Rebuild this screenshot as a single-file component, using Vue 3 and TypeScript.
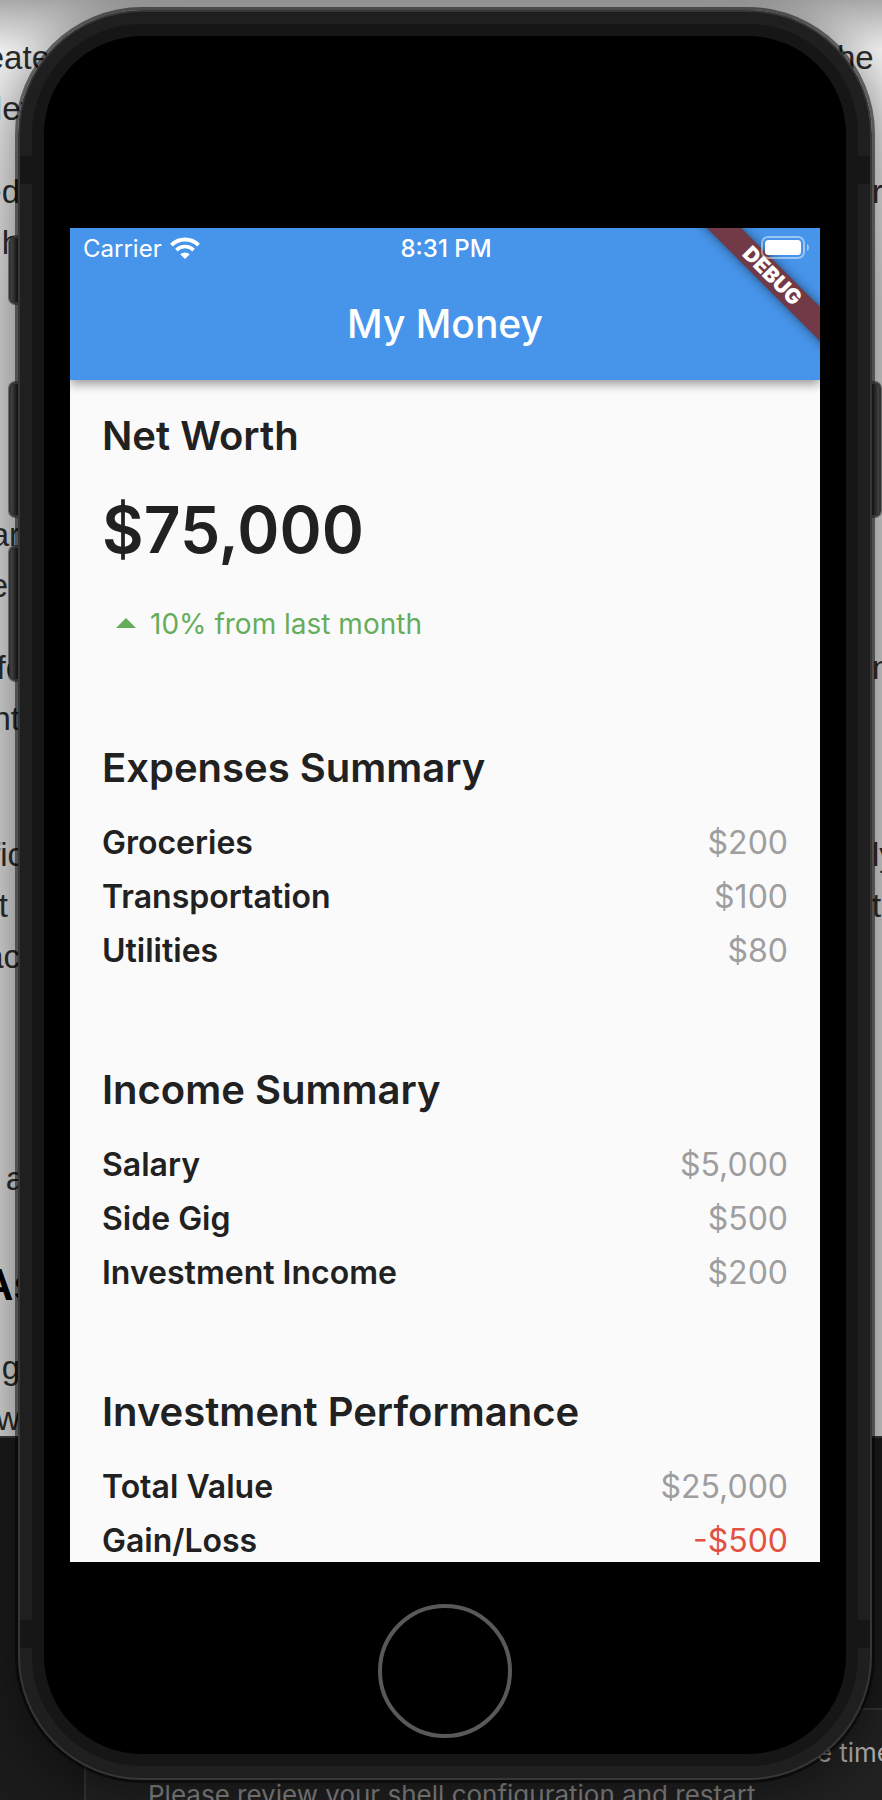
<script setup lang="ts">
interface Entry {
  label: string
  value: string
  negative?: boolean
}
interface Summary {
  title: string
  entries: Entry[]
}
interface Scrap {
  text: string
  top: number
  kind?: string
}

const summaries: Summary[] = [
  {
    title: 'Expenses Summary',
    entries: [
      { label: 'Groceries', value: '$200' },
      { label: 'Transportation', value: '$100' },
      { label: 'Utilities', value: '$80' },
    ],
  },
  {
    title: 'Income Summary',
    entries: [
      { label: 'Salary', value: '$5,000' },
      { label: 'Side Gig', value: '$500' },
      { label: 'Investment Income', value: '$200' },
    ],
  },
  {
    title: 'Investment Performance',
    entries: [
      { label: 'Total Value', value: '$25,000' },
      { label: 'Gain/Loss', value: '-$500', negative: true },
    ],
  },
]

const leftScraps: Scrap[] = [
  { text: 'eate', top: 40, kind: 'wide' },
  { text: 'lev', top: 91, kind: 'medium' },
  { text: 'ed', top: 174 },
  { text: 'h', top: 225 },
  { text: 'ar', top: 517 },
  { text: 'e', top: 568, kind: 'short' },
  { text: 'fo', top: 650, kind: 'tucked' },
  { text: 'nt', top: 701 },
  { text: 'fic', top: 837, kind: 'tucked' },
  { text: 't', top: 888, kind: 'short' },
  { text: 'ac', top: 939 },
  { text: 'a', top: 1161, kind: 'tucked' },
  { text: 'As', top: 1267, kind: 'heading' },
  { text: 'g', top: 1350 },
  { text: 'w', top: 1401 },
]
const rightScraps: Scrap[] = [
  { text: 'he', top: 40, kind: 'wide' },
  { text: 'rr', top: 174 },
  { text: 'n', top: 650 },
  { text: 'ly', top: 837 },
  { text: 't', top: 888 },
]
</script>

<template>
  <div class="desktop">
    <div class="backdrop" aria-hidden="true">
      <div class="document">
        <span
          v-for="s in leftScraps"
          :key="'l' + s.top"
          class="scrap left"
          :class="s.kind"
          :style="{ top: s.top + 'px' }"
        >{{ s.text }}</span>
        <span
          v-for="s in rightScraps"
          :key="'r' + s.top"
          class="scrap right"
          :class="s.kind"
          :style="{ top: s.top + 'px' }"
        >{{ s.text }}</span>
      </div>
      <div class="terminal">
        <div class="panel">
          <p class="panel-top">e time</p>
          <p class="panel-note">Please review your shell configuration and restart</p>
        </div>
      </div>
    </div>

    <div class="phone">
      <i class="key mute"></i>
      <i class="key volume-up"></i>
      <i class="key volume-down"></i>
      <i class="key power"></i>
      <div class="frame">
        <i class="band upper"></i>
        <i class="band lower"></i>
        <div class="rim">
          <div class="glass">
            <main class="screen">
              <header class="app-bar">
                <div class="status">
                  <span class="carrier">
                    Carrier
                    <svg width="30" height="22" viewBox="0 0 30 22" aria-label="Wi-Fi">
                      <path d="M1.5 8.2A19 19 0 0 1 28.5 8.2" fill="none" stroke="#fff" stroke-width="4" />
                      <path d="M6.4 13.1A12.2 12.2 0 0 1 23.6 13.1" fill="none" stroke="#fff" stroke-width="3.6" />
                      <path d="M15 22L10.2 17.3A7 7 0 0 1 19.8 17.3Z" fill="#fff" />
                    </svg>
                  </span>
                  <time>8:31 PM</time>
                  <span class="battery">
                    <svg width="48" height="24" viewBox="0 0 48 24" aria-label="Battery full">
                      <rect x="1" y="1" width="42" height="21" rx="6" fill="none" stroke="#fff" stroke-opacity=".45" stroke-width="2" />
                      <rect x="4" y="4" width="36" height="15" rx="3.5" fill="#fff" />
                      <path d="M46 8Q48 9 48 11.5T46 15Z" fill="#fff" fill-opacity=".5" />
                    </svg>
                  </span>
                </div>
                <h1>My Money</h1>
              </header>
              <div class="ribbon">DEBUG</div>

              <div class="content">
                <section>
                  <h2>Net Worth</h2>
                  <p class="amount">$75,000</p>
                  <p class="trend">
                    <svg width="48" height="48" viewBox="0 0 48 48" aria-hidden="true">
                      <path d="M14 28L24 18L34 28Z" fill="currentColor" />
                    </svg>
                    10% from last month
                  </p>
                </section>
                <section v-for="group in summaries" :key="group.title">
                  <h2>{{ group.title }}</h2>
                  <table :aria-label="group.title">
                    <tbody>
                      <tr v-for="e in group.entries" :key="e.label">
                        <th scope="row">{{ e.label }}</th>
                        <td :class="{ negative: e.negative }">{{ e.value }}</td>
                      </tr>
                    </tbody>
                  </table>
                </section>
              </div>
            </main>
            <div class="chin">
              <button class="home" type="button" aria-label="Home"></button>
            </div>
          </div>
        </div>
      </div>
    </div>
  </div>
</template>

<style>
body {
  background: #171717;
}
</style>

<style scoped>
* {
  box-sizing: border-box;
}
h1,
h2,
p {
  margin: 0;
}
.desktop {
  position: relative;
  padding: 10px 10px 20px 18px;
  overflow: hidden;
  font-family: Inter, 'Liberation Sans', sans-serif;
}
.backdrop {
  position: absolute;
  inset: 0;
  display: flex;
  flex-direction: column;
}
.document {
  position: relative;
  flex: 0 0 1436px;
  overflow: hidden;
  background: linear-gradient(#a8a8a8, #f0f0f0 50px, #ececec 120px, #dadada 300px);
}
.scrap {
  position: absolute;
  font: 33px/36px 'Liberation Sans', sans-serif;
  color: #2c2c2c;
  white-space: nowrap;
}
.left {
  right: calc(100% - 20px);
}
.left.wide {
  right: calc(100% - 50px);
}
.left.medium {
  right: calc(100% - 37px);
}
.left.tucked {
  right: calc(100% - 24px);
}
.left.short {
  right: calc(100% - 8px);
}
.right {
  left: calc(100% - 10px);
}
.right.wide {
  left: calc(100% - 45px);
}
.left.heading {
  right: calc(100% - 38px);
  font-size: 44px;
  font-weight: 700;
  color: #000;
}
.terminal {
  flex: 1;
  display: flex;
  background: #1b1b1b;
  border-top: 2px solid #3a3a3a;
}
.panel {
  flex: 1;
  margin: 270px 0 0 84px;
  border: 2px solid #343434;
  border-right: 0;
  border-bottom: 0;
  font-size: 26px;
  line-height: 42px;
  background: #222;
  white-space: nowrap;
}
.panel-top {
  padding: 22px 0 0;
  text-align: right;
  margin-right: -10px;
  color: #b4b4b4;
}
.panel-note {
  padding-left: 62px;
  color: #8c8c8c;
}
.phone {
  position: relative;
  border-radius: 124px;
  box-shadow: 0 0 0 3px rgba(0, 0, 0, 0.5), 0 10px 50px 6px rgba(0, 0, 0, 0.45);
}
.frame {
  position: relative;
  padding: 12px;
  border: 2px solid #363636;
  border-radius: 124px;
  background: #1f1f1f;
}
.band {
  position: absolute;
  left: 0;
  right: 0;
  height: 28px;
  background: #161616;
}
.upper {
  top: 144px;
}
.lower {
  bottom: 130px;
}
.key {
  position: absolute;
  left: -9px;
  width: 16px;
  height: 135px;
  border: 2px solid #333;
  border-radius: 6px;
  background: linear-gradient(90deg, #444, #161616 50%);
  box-shadow: 0 0 0 1px rgba(0, 0, 0, 0.4);
}
.mute {
  top: 226px;
  height: 68px;
}
.volume-up {
  top: 372px;
}
.volume-down {
  top: 536px;
}
.power {
  top: 372px;
  left: auto;
  right: -9px;
  background: linear-gradient(270deg, #444, #161616 50%);
}
.rim {
  position: relative;
  padding: 12px;
  border-radius: 110px;
  background: #161616;
}
.glass {
  padding: 192px 26px 0;
  border-radius: 98px;
  background: #000;
}
.screen {
  position: relative;
  aspect-ratio: 375 / 667;
  overflow: hidden;
  background: #fafafa;
  color: #212121;
}
.app-bar {
  position: relative;
  height: 152px;
  background: #4795eb;
  color: #fff;
  box-shadow: 0 4px 10px rgba(0, 0, 0, 0.4);
}
.status {
  position: relative;
  z-index: 2;
  display: grid;
  grid-template-columns: 1fr auto 1fr;
  align-items: center;
  height: 40px;
  padding: 0 11px 0 13px;
  font-size: 24px;
}
.carrier {
  display: flex;
  align-items: center;
  gap: 8px;
}
.status time {
  font-weight: 500;
}
.battery {
  display: flex;
  justify-content: flex-end;
}
h1 {
  font-size: 39px;
  font-weight: 500;
  line-height: 112px;
  text-align: center;
}
.ribbon {
  position: absolute;
  top: 36px;
  right: -52px;
  width: 200px;
  height: 24px;
  transform: rotate(45deg);
  background: rgba(132, 24, 6, 0.72);
  box-shadow: 0 0 12px rgba(0, 0, 0, 0.5);
  color: #fff;
  font-size: 21px;
  font-weight: 900;
  line-height: 24px;
  text-align: center;
}
.content {
  display: flex;
  flex-direction: column;
  gap: 88px;
  padding: 32px;
}
h2 {
  font-size: 40px;
  font-weight: 600;
  line-height: 48px;
}
.amount {
  margin-top: 32px;
  font-size: 64px;
  font-weight: 600;
  line-height: 76px;
}
.trend {
  display: flex;
  align-items: center;
  margin-top: 24px;
  height: 64px;
  font-size: 28px;
  color: #66ad5b;
}
table {
  width: 100%;
  margin-top: 24px;
  border-collapse: collapse;
  font-size: 32px;
  line-height: 54px;
}
th,
td {
  padding: 0;
}
th {
  text-align: left;
  font-weight: 600;
}
td {
  text-align: right;
  color: #9e9e9e;
}
.negative {
  color: #e25241;
}
.chin {
  display: grid;
  place-items: center;
  height: 192px;
  padding-top: 26px;
}
.home {
  width: 134px;
  height: 134px;
  border: 4px solid #595959;
  border-radius: 50%;
  background: #000;
}
</style>
